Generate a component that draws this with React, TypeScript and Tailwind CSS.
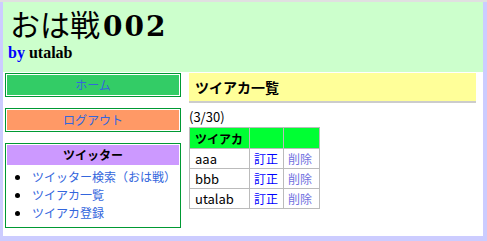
import React from "react";

const jp = "font-['Noto_Sans_CJK_JP',_'Noto_Sans',_sans-serif]";

function Btn({ label, bg }: { label: string; bg: string }) {
  return (
    <div className="border border-[#009933] bg-white p-[1px]">
      <div className={`${bg} h-[20px] text-center text-[12px] leading-[20px] text-[#3366dd] whitespace-nowrap`}>{label}</div>
    </div>
  );
}

export default function App() {
  const rows = ["aaa", "bbb", "utalab"];
  return (
    <div className="h-[241px] w-full overflow-hidden bg-[#ccccff] border-t-2 border-[#e0e0e0] pl-[3px] pr-[4px] pb-[5px]">
      <div className={`h-full bg-white flex flex-col ${jp}`}>
        <div className="h-[70px] bg-[#ccffcc] pl-[5px] pt-[7px] shrink-0">
          <div className="text-[30px] leading-[34px] text-black font-['Liberation_Serif',_'Noto_Sans_CJK_JP',_serif] whitespace-nowrap">
            <span className="pl-[2px]">おは戦</span>
            <span className="font-bold font-['DejaVu_Serif',_serif] text-[28px] tracking-[2px] pl-[3px]">002</span>
          </div>
          <div className="text-[16px] leading-[18px] font-bold font-['Liberation_Serif',_serif]">
            <span className="text-[#0000ff]">by</span> <span className="text-black">utalab</span>
          </div>
        </div>
        <div className="flex pt-[1px] pl-[2px] gap-[8px]">
          <div className="w-[176px] flex flex-col gap-[11px]">
            <Btn label="ホーム" bg="bg-[#33cc66]" />
            <Btn label="ログアウト" bg="bg-[#ff9966]" />
            <div className="border border-[#009933] p-[1px] h-[85px]">
              <div className="bg-[#cc99ff] h-[20px] text-center text-[12px] leading-[20px] font-bold text-black">ツイッター</div>
              <ul className="list-disc pl-[24px] pt-[3px] text-[12px] leading-[18px] text-[#3366dd] marker:text-black whitespace-nowrap">
                <li className="pl-[1px]">ツイッター検索（おは戦）</li>
                <li className="pl-[1px]">ツイアカ一覧</li>
                <li className="pl-[1px]">ツイアカ登録</li>
              </ul>
            </div>
          </div>
          <div className="w-[287px]">
            <div className="h-[30px] bg-[#ffff99] border-b-2 border-[#cccccc] px-[6px] text-[14px] leading-[28px] font-bold text-black whitespace-nowrap">
              ツイアカ一覧
            </div>
            <div className="pt-[5px] text-[13px] leading-[18px] text-black">(3/30)</div>
            <table className="mt-[1px] border-collapse text-[12px] text-black whitespace-nowrap">
              <thead>
                <tr className="bg-[#00ff33]">
                  <th className="w-[60px] h-[21px] border border-[#bbbbbb] text-left px-[5px] py-0 font-bold leading-[19px]">ツイアカ</th>
                  <th className="w-[34px] border border-[#bbbbbb] p-0"></th>
                  <th className="w-[36px] border border-[#bbbbbb] p-0"></th>
                </tr>
              </thead>
              <tbody>
                {rows.map((r) => (
                  <tr key={r}>
                    <td className="h-[20px] border border-[#bbbbbb] px-[5px] py-0 leading-[18px] text-[13px]">{r}</td>
                    <td className="border border-[#bbbbbb] px-[4px] py-0 leading-[18px] text-[#0000ff]">訂正</td>
                    <td className="border border-[#bbbbbb] px-[4px] py-0 leading-[18px] text-[#7070e0]">削除</td>
                  </tr>
                ))}
              </tbody>
            </table>
          </div>
        </div>
      </div>
    </div>
  );
}
